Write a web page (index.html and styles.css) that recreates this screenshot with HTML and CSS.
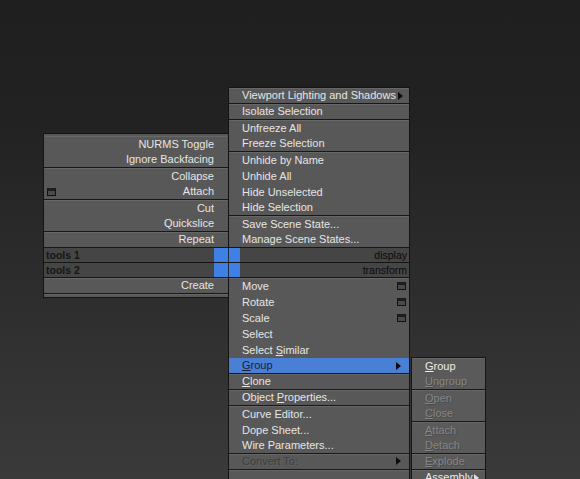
FILE: index.html
```html
<!DOCTYPE html>
<html lang="en">
<head>
	<meta charset="UTF-8">
	<title>Quad Menu</title>
	<link rel="stylesheet" href="styles.css">
</head>
<body>
	<div class="viewport">
		<div class="quad">
			<!-- tools 1 -->
			<div class="qtl">
				<div class="group">
					<div class="item">NURMS Toggle</div>
					<div class="item">Ignore Backfacing</div>
				</div>
				<div class="group">
					<div class="item">Collapse</div>
					<div class="item"><span class="win win-left"></span>Attach</div>
				</div>
				<div class="group">
					<div class="item">Cut</div>
					<div class="item">Quickslice</div>
				</div>
				<div class="group">
					<div class="item">Repeat</div>
				</div>
			</div>

			<!-- display -->
			<div class="qtr">
				<div class="group">
					<div class="item">Viewport Lighting and Shadows<span class="arrow"></span></div>
				</div>
				<div class="group">
					<div class="item">Isolate Selection</div>
				</div>
				<div class="group">
					<div class="item">Unfreeze All</div>
					<div class="item">Freeze Selection</div>
				</div>
				<div class="group">
					<div class="item">Unhide by Name</div>
					<div class="item">Unhide All</div>
					<div class="item">Hide Unselected</div>
					<div class="item">Hide Selection</div>
				</div>
				<div class="group">
					<div class="item">Save Scene State...</div>
					<div class="item">Manage Scene States...</div>
				</div>
			</div>

			<div class="heads heads-left">
				<div class="head"><span class="label">tools 1</span><span class="blue"></span></div>
				<div class="head"><span class="label">tools 2</span><span class="blue"></span></div>
			</div>
			<div class="heads heads-right">
				<div class="head"><span class="blue"></span><span class="label">display</span></div>
				<div class="head"><span class="blue"></span><span class="label">transform</span></div>
			</div>

			<!-- tools 2 -->
			<div class="qbl">
				<div class="group">
					<div class="item">Create</div>
				</div>
				<div class="group">
					<div class="item thin"></div>
				</div>
			</div>

			<!-- transform -->
			<div class="qbr">
				<div class="group">
					<div class="item">Move<span class="win"></span></div>
					<div class="item">Rotate<span class="win"></span></div>
					<div class="item">Scale<span class="win"></span></div>
					<div class="item">Select</div>
					<div class="item">Select <u>S</u>imilar</div>
					<div class="item active"><u>G</u>roup<span class="arrow"></span>
						<div class="submenu">
							<div class="group">
								<div class="item"><u>G</u>roup</div>
								<div class="item off"><u>U</u>ngroup</div>
							</div>
							<div class="group">
								<div class="item off"><u>O</u>pen</div>
								<div class="item off"><u>C</u>lose</div>
							</div>
							<div class="group">
								<div class="item off"><u>A</u>ttach</div>
								<div class="item off"><u>D</u>etach</div>
							</div>
							<div class="group">
								<div class="item off"><u>E</u>xplode</div>
							</div>
							<div class="group">
								<div class="item">Assembly<span class="arrow small"></span></div>
							</div>
						</div>
					</div>
				</div>
				<div class="group">
					<div class="item"><u>C</u>lone</div>
				</div>
				<div class="group">
					<div class="item">Object <u>P</u>roperties...</div>
				</div>
				<div class="group">
					<div class="item">Curve Editor...</div>
					<div class="item">Dope Sheet...</div>
					<div class="item">Wire Parameters...</div>
				</div>
				<div class="group">
					<div class="item dis">Convert To:<span class="arrow"></span></div>
				</div>
				<div class="group">
					<div class="item"></div>
				</div>
			</div>
		</div>
	</div>
</body>
</html>
```
FILE: styles.css
```css
*{
	padding: 0;
	margin: 0;
	box-sizing: border-box;
}
html,body{
	width: 100%;
	height: 100%;
	overflow: hidden;
}
body{
	font-family: "Liberation Sans", Arial, sans-serif;
	font-size: 11px;
	background-color: #262626;
}
.viewport{
	width: 580px;
	height: 479px;
	position: relative;
	background: linear-gradient(#1f1f1f 0%, #222 25%, #2d2d2d 60%, #3a3a3a 100%);
}
.quad{
	position: absolute;
	left: 43px;
	top: 87px;
	display: grid;
	grid-template-columns: 185px 182px;
}
.qtl, .qtr, .qbl, .qbr{
	background-color: #585858;
	border-left: 1px solid #141414;
}
.qtr, .qbr{
	border-right: 1px solid #141414;
}
.qtl{
	grid-column: 1;
	grid-row: 1;
	align-self: end;
	border-top: 1px solid #141414;
	padding-top: 2px;
}
.qtr{
	grid-column: 2;
	grid-row: 1;
	border-top: 1px solid #141414;
}
.qbl{
	grid-column: 1;
	grid-row: 3;
	align-self: start;
}
.qbr{
	grid-column: 2;
	grid-row: 3;
}
.group{
	border-bottom: 1px solid #181818;
	box-shadow: inset 0 1px 0 #676767;
}
.item{
	height: 16px;
	line-height: 16px;
	padding-left: 13px;
	color: #e6e6e6;
	white-space: nowrap;
	position: relative;
}
.group .item:last-child{
	height: 15px;
	line-height: 15px;
}
.qtl .item, .qbl .item{
	text-align: right;
	padding-right: 14px;
}
.group .item.thin{
	height: 3px;
}
.item u{
	text-decoration: underline;
	text-underline-offset: 1px;
}
.item.active{
	background-color: #4a7fd6;
	color: #17223a;
}
.item.dis{
	color: #3e3e3e;
	text-shadow: 1px 1px 0 #626262;
}
.item.off{
	color: #828282;
	text-shadow: 1px 1px 0 #4a4a4a;
}
.arrow{
	position: absolute;
	right: 6px;
	top: 4px;
	width: 0;
	height: 0;
	border-top: 4px solid transparent;
	border-bottom: 4px solid transparent;
	border-left: 5px solid #0c0c0c;
}
.active > .arrow{
	right: 8px;
}
.dis > .arrow{
	right: 8px;
	top: 3px;
}
.win{
	position: absolute;
	right: 3px;
	top: 4px;
	width: 9px;
	height: 8px;
	border: 1px solid #111;
	border-top: 3px solid #1d1d1d;
	background-color: #4a4a4a;
}
.win-left{
	right: auto;
	left: 3px;
}

/* headers in the middle */
.heads{
	grid-row: 2;
}
.heads-left{
	grid-column: 1;
	border-left: 1px solid #141414;
}
.heads-right{
	grid-column: 2;
	border-right: 1px solid #141414;
}
.head{
	height: 15px;
	display: flex;
	border-bottom: 1px solid #151515;
	background-color: #454545;
	color: #0a0a0a;
	font-size: 10.5px;
	line-height: 14px;
}
.head .label{
	flex: 1;
	padding: 0 2px;
}
.heads-left .label{
	font-weight: bold;
	color: #151515;
}
.heads-right .label{
	text-align: right;
	padding-right: 2px;
}
.head .blue{
	background-color: #3f80e4;
}
.heads-left .blue{
	width: 14px;
}
.heads-right .blue{
	width: 12px;
	border-left: 1px solid #1c2a40;
}

/* group submenu */
.submenu{
	position: absolute;
	left: 182px;
	top: -1px;
	width: 75px;
	background-color: #5a5a5a;
	border: 1px solid #161616;
	border-bottom: none;
	color: #e6e6e6;
	z-index: 2;
}
.submenu .item{
	padding-left: 13px;
	color: #ececec;
}
.submenu .item.off{
	color: #858585;
}
.arrow.small{
	border-left-color: #ddd;
}
```
